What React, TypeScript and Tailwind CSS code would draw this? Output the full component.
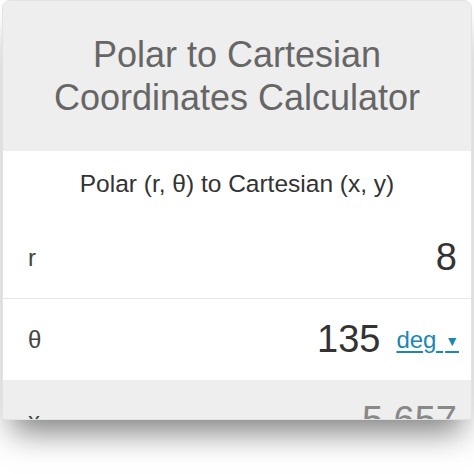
export default function App() {
  return (
    <div className="min-h-[474px] bg-white px-[2px] font-['Liberation_Sans',Arial,sans-serif]">
      <div className="h-[420px] overflow-hidden rounded-t-lg border border-[#e2e2e2] bg-white shadow-[0_22px_30px_-10px_rgba(0,0,0,0.5)]">
        <div className="flex h-[150px] items-center justify-center bg-[#eeeeee] text-center text-[36px] leading-[43px] text-[#666666]">
          <h1>
            Polar to Cartesian
            <br />
            Coordinates Calculator
          </h1>
        </div>

        <div className="flex h-[66px] items-center justify-center text-[24.5px] text-[#333333]">
          Polar (r, θ) to Cartesian (x, y)
        </div>

        <div className="flex h-[82px] items-center justify-between border-b border-[#e6e6e6] pl-[25px] pr-[14px]">
          <span className="text-[24px] text-[#444444]">r</span>
          <span className="text-[38px] text-[#333333]">8</span>
        </div>

        <div className="flex h-[81px] items-center justify-between pl-[25px] pr-[12px]">
          <span className="text-[24px] text-[#444444]">θ</span>
          <div className="flex items-center gap-[16px]">
            <span className="text-[38px] text-[#333333]">135</span>
            <span className="text-[24px] text-[#1b87b5] underline underline-offset-[3px]">
              deg&nbsp;<span className="ml-[2px] text-[14px] align-middle">▼</span>
            </span>
          </div>
        </div>

        <div className="flex h-[81px] items-center justify-between bg-[#eeeeee] pl-[25px] pr-[14px]">
          <span className="text-[24px] text-[#444444]">x</span>
          <span className="text-[38px] text-[#888888]">5.657</span>
        </div>
      </div>
    </div>
  );
}
